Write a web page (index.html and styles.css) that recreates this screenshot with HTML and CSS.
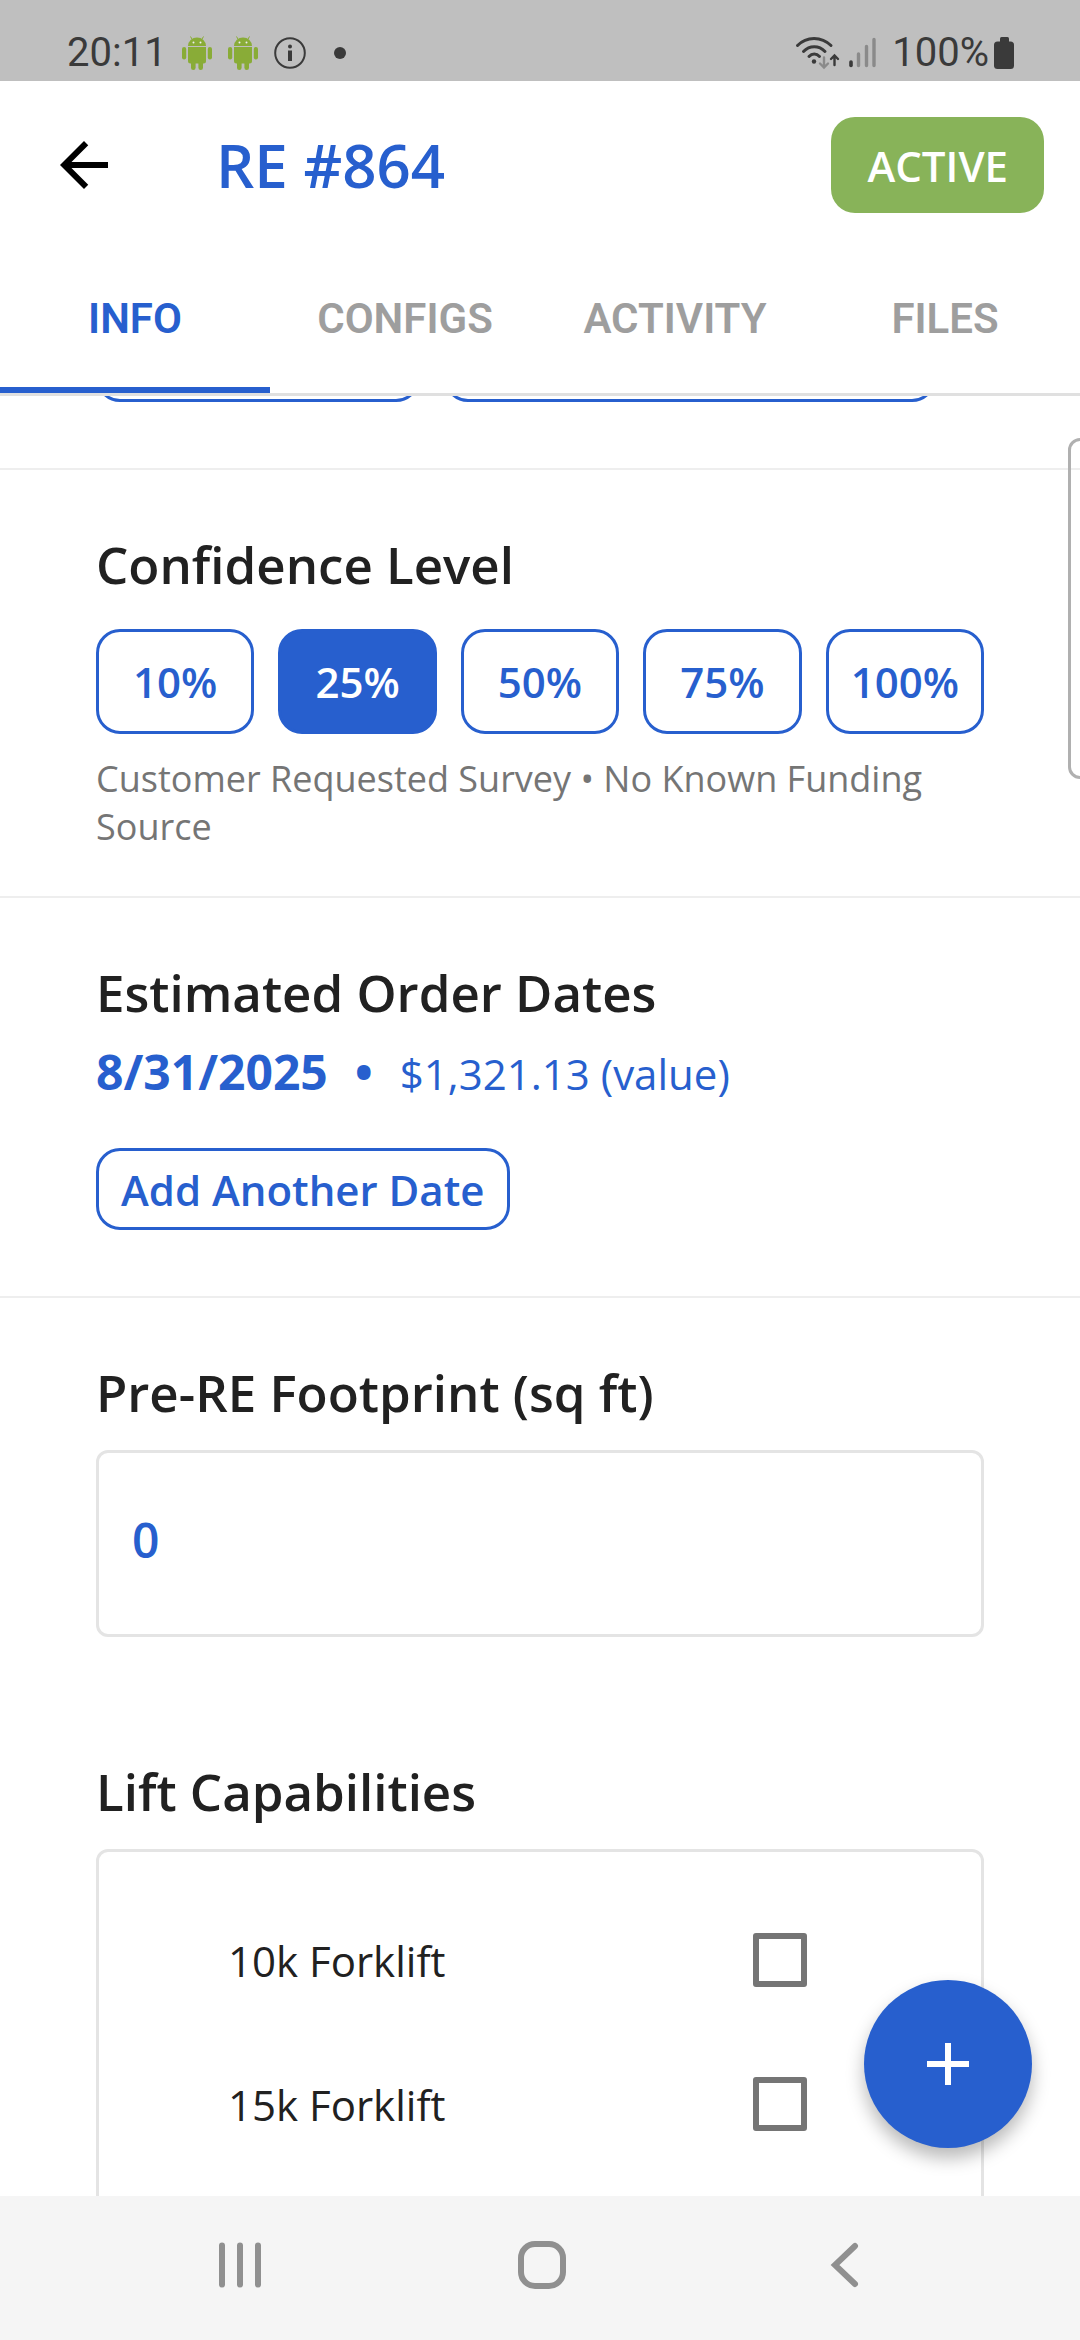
FILE: index.html
```html
<!DOCTYPE html>
<html lang="en">
<head>
<meta charset="utf-8">
<meta name="viewport" content="width=device-width, initial-scale=1">
<title>RE #864</title>
<link rel="stylesheet" href="styles.css">
</head>
<body>
<svg class="defs" aria-hidden="true">
  <symbol id="robot" viewBox="0 0 30 34">
    <g fill="#89ac37">
      <path d="M6 10a9 8.500 0 0 1 18 0z"/>
      <path d="M6 11h18v14a2.500 2.500 0 0 1-2.500 2.500h-13A2.500 2.500 0 0 1 6 25z"/>
      <rect x="0" y="11" width="4.200" height="12.500" rx="2.100"/>
      <rect x="25.800" y="11" width="4.200" height="12.500" rx="2.100"/>
      <rect x="9" y="24" width="4.600" height="10" rx="2.300"/>
      <rect x="16.400" y="24" width="4.600" height="10" rx="2.300"/>
    </g>
    <path d="M8.500.5l2 3.500M21.500.5l-2 3.500" stroke="#89ac37" stroke-width="1"/>
    <circle cx="11.500" cy="6.500" r="1" fill="#eee"/><circle cx="18.500" cy="6.500" r="1" fill="#eee"/>
  </symbol>
</svg>
<div class="screen">
  <div class="status">
    <span class="status-text">20:11</span>
    <div class="status-icons">
      <svg width="30" height="34"><use href="#robot"/></svg>
      <svg width="30" height="34"><use href="#robot"/></svg>
      <svg width="32" height="34" viewBox="0 0 32 34"><circle cx="16" cy="17" r="14.800" fill="none" stroke="#3a3a3a" stroke-width="2"/><circle cx="16" cy="10.500" r="2" fill="#3a3a3a"/><path d="M14 14.500h4v10.500h-4z" fill="#3a3a3a"/></svg>
    </div>
    <span class="more-dot"></span>
    <div class="status-right">
      <svg width="84" height="36" viewBox="796 34 84 36" fill="none" stroke-linecap="round">
        <g stroke="#3a3a3a" stroke-width="3"><path d="M798.500 44.500c9-9.500 24-9.500 33.500 0M804.500 50.500c6-6.500 15.500-6.500 21.500 0M810 55.500c3-3.300 7.500-3.300 10.500 0"/></g>
        <circle cx="815" cy="60.500" r="2.200" fill="#3a3a3a"/>
        <path d="M825 56.500v9.500M821 62.500l4 4 4-4" stroke="#8a8a8a" stroke-width="2.400"/>
        <path d="M835.500 64v-9M832 58l3.500-3.500 3.500 3.500" stroke="#3a3a3a" stroke-width="2.400"/>
        <path d="M852 61v3.500" stroke="#3a3a3a" stroke-width="3.600"/>
        <path d="M859.500 53v11.500M867.500 45.500v19M875 38.500v26" stroke="#8a8a8a" stroke-width="3.400"/>
      </svg>
      <span class="status-text">100%</span>
      <svg width="20" height="34" viewBox="0 0 20 34" fill="#3a3a3a"><rect x="6" y="1" width="9" height="8" rx="1.500"/><rect x="0" y="5.500" width="20" height="27.500" rx="3.500"/></svg>
    </div>
  </div>

  <header class="appbar">
    <button class="back" type="button" aria-label="Back"><svg width="72" height="72" viewBox="0 0 24 24"><path d="M20 11H7.830l5.590-5.590L12 4l-8 8 8 8 1.410-1.410L7.830 13H20v-2z"/></svg></button>
    <h1 class="title">RE #864</h1>
    <button class="badge" type="button">ACTIVE</button>
  </header>

  <nav class="tabs">
    <a class="tab tab-active" href="#info">INFO</a>
    <a class="tab" href="#configs">CONFIGS</a>
    <a class="tab" href="#activity">ACTIVITY</a>
    <a class="tab" href="#files">FILES</a>
  </nav>

  <main class="content" id="info">
    <section class="section section-cut">
      <div class="cut-row"><span class="cut-pill"></span><span class="cut-pill cut-wide"></span></div>
    </section>

    <section class="section section-levels">
      <h2 class="heading">Confidence Level</h2>
      <div class="chips">
        <button class="chip" type="button">10%</button>
        <button class="chip chip-on" type="button">25%</button>
        <button class="chip" type="button">50%</button>
        <button class="chip" type="button">75%</button>
        <button class="chip" type="button">100%</button>
      </div>
      <p class="caption">Customer Requested Survey • No Known Funding Source</p>
    </section>

    <section class="section">
      <h2 class="heading">Estimated Order Dates</h2>
      <p class="order"><strong>8/31/2025</strong><strong>•</strong><span class="value">$1,321.13 (value)</span></p>
      <button class="add" type="button">Add Another Date</button>
    </section>

    <section class="section section-last">
      <label class="heading" for="footprint">Pre-RE Footprint (sq ft)</label>
      <input class="field" id="footprint" type="text" inputmode="numeric" value="0">
      <h2 class="heading heading-lift">Lift Capabilities</h2>
      <div class="list">
        <label class="row"><span>10k Forklift</span><input class="check" type="checkbox"></label>
        <label class="row"><span>15k Forklift</span><input class="check" type="checkbox"></label>
      </div>
    </section>

    <div class="edge-handle"></div>
    <button class="fab" type="button" aria-label="Add"><svg width="72" height="72" viewBox="0 0 24 24"><path d="M19 13h-6v6h-2v-6H5v-2h6V5h2v6h6v2z" fill="#fff"/></svg></button>
  </main>

  <div class="navbar">
    <button class="navkey" type="button" aria-label="Recents"><svg width="48" height="48" viewBox="0 0 48 48"><path d="M6 4.500v39M24 4.500v39M42 4.500v39"/></svg></button>
    <button class="navkey" type="button" aria-label="Home"><svg width="48" height="48" viewBox="0 0 48 48"><rect x="3" y="3" width="42" height="42" rx="14"/></svg></button>
    <button class="navkey" type="button" aria-label="Back"><svg width="48" height="48" viewBox="0 0 48 48"><path d="M35 5L15 24l20 19"/></svg></button>
  </div>
</div>
</body>
</html>
```
FILE: styles.css
```css
:root {
  --blue: #275fce;
  --ink: #212121;
  --line: #e4e4e4;
}

* { box-sizing: border-box; }

body {
  margin: 0;
  background: #fff;
  color: var(--ink);
  font-family: "Open Sans", "Noto Sans", sans-serif;
}

h1, h2, p { margin: 0; }

button {
  padding: 0;
  border: 0;
  background: none;
  font-family: inherit;
}

svg { display: block; }

.defs {
  position: absolute;
  width: 0;
  height: 0;
}

.screen {
  display: flex;
  flex-direction: column;
  height: 100vh;
}

/* System status bar */
.status {
  display: flex;
  align-items: center;
  height: 81px;
  padding: 24px 66px 0 67px;
  background: #bfbfbf;
  color: #3a3a3a;
}

.status-text {
  font: 400 40px/48px Roboto, sans-serif;
}

.status-icons {
  display: flex;
  gap: 16px;
  margin-left: 15px;
}

.more-dot {
  width: 12px;
  height: 12px;
  margin-left: 28px;
  border-radius: 50%;
  background: #3a3a3a;
}

.status-right {
  display: flex;
  align-items: center;
  gap: 5px;
  margin-left: auto;
}

.status-right .status-text { margin-left: 8px; }

/* App bar */
.appbar {
  display: flex;
  align-items: center;
  height: 168px;
  padding: 0 36px 0 48px;
}

.title {
  flex: 1;
  margin-left: 96px;
  color: var(--blue);
  font-size: 60px;
  line-height: 84px;
  font-weight: 600;
}

.badge {
  height: 96px;
  padding: 0 36px;
  border-radius: 24px;
  background: #88b359;
  color: #fff;
  font-size: 42px;
  font-weight: 600;
}

/* Tabs */
.tabs {
  display: grid;
  grid-template-columns: repeat(4, 1fr);
  border-bottom: 3px solid #e0e0e0;
}

.tab {
  height: 144px;
  border-bottom: 6px solid transparent;
  color: #9e9e9e;
  font: 600 42px/140px Roboto, sans-serif;
  text-align: center;
  text-decoration: none;
}

.tab-active {
  border-color: var(--blue);
  color: var(--blue);
}

/* Scrolling content */
.content {
  position: relative;
  flex: 1;
  min-height: 0;
  overflow: hidden;
}

.section {
  padding: 60px 96px 66px;
  border-bottom: 2px solid #eee;
}

.section-cut { padding-top: 0; }
.section-levels { padding-bottom: 45px; }

.section-last {
  padding-bottom: 0;
  border: 0;
}

.cut-row {
  display: flex;
  align-items: flex-end;
  gap: 24px;
  height: 6px;
  overflow: hidden;
}

.cut-pill {
  flex: none;
  width: 324px;
  height: 82px;
  border: 3px solid var(--blue);
  border-radius: 24px;
}

.cut-wide { width: 492px; }

.heading {
  display: block;
  font-size: 51px;
  line-height: 68px;
  font-weight: 600;
}

.chips {
  display: grid;
  grid-template-columns: repeat(5, 1fr);
  gap: 24px;
  margin-top: 31px;
}

.chip,
.add {
  border: 3px solid var(--blue);
  border-radius: 24px;
  color: var(--blue);
  font-size: 42px;
  font-weight: 600;
}

.chip { height: 105px; }

.chip-on {
  background: var(--blue);
  color: #fff;
}

.caption {
  margin-top: 21px;
  color: #757575;
  font-size: 36px;
  line-height: 48px;
}

.order {
  display: flex;
  align-items: baseline;
  gap: 27px;
  margin-top: 16px;
  color: var(--blue);
  font-size: 48px;
  line-height: 60px;
}

.order strong { font-weight: 700; }

.value { font-size: 42px; }

.add {
  height: 82px;
  margin-top: 44px;
  padding: 0 22px;
}

.field {
  display: block;
  width: 100%;
  height: 187px;
  margin-top: 24px;
  padding: 0 33px 8px;
  border: 3px solid var(--line);
  border-radius: 12px;
  background: none;
  color: var(--blue);
  font: 600 48px/60px "Open Sans", "Noto Sans", sans-serif;
}

.heading-lift { margin-top: 120px; }

.list {
  margin-top: 24px;
  padding: 36px 174px 36px 129px;
  border: 3px solid var(--line);
  border-radius: 12px;
}

.row {
  display: flex;
  align-items: center;
  justify-content: space-between;
  height: 144px;
  font-size: 42px;
}

.check {
  appearance: none;
  width: 54px;
  height: 54px;
  margin: 0;
  border: 6px solid #757575;
  border-radius: 3px;
}

/* Overlays */
.edge-handle {
  position: absolute;
  top: 42px;
  right: -12px;
  width: 24px;
  height: 341px;
  border: 3px solid #b0b0b0;
  border-radius: 12px;
}

.fab {
  position: absolute;
  right: 48px;
  bottom: 48px;
  display: grid;
  place-items: center;
  width: 168px;
  height: 168px;
  border-radius: 50%;
  background: var(--blue);
  box-shadow: 0 10px 18px rgba(0, 0, 0, .28);
}

/* System navigation bar */
.navbar {
  display: flex;
  justify-content: space-between;
  height: 144px;
  padding: 0 212px 6px 216px;
  background: #f5f5f5;
}

.navkey svg {
  fill: none;
  stroke: #909090;
  stroke-width: 6;
  stroke-linecap: round;
}
```
